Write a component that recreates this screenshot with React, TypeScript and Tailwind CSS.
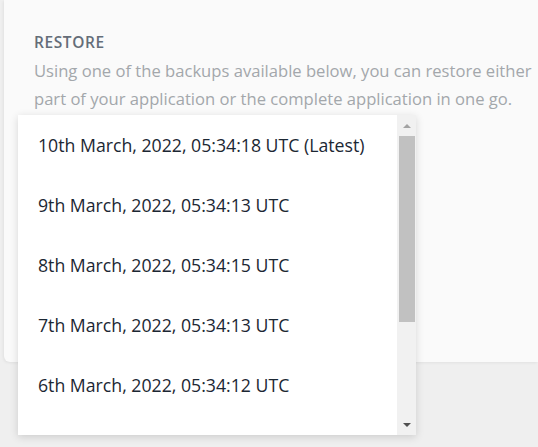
import React from 'react';

const backups = [
  '10th March, 2022, 05:34:18 UTC (Latest)',
  '9th March, 2022, 05:34:13 UTC',
  '8th March, 2022, 05:34:15 UTC',
  '7th March, 2022, 05:34:13 UTC',
  '6th March, 2022, 05:34:12 UTC',
];

export default function App() {
  return (
    <div
      className="h-[447px] w-[538px] overflow-hidden bg-[#efefef] pl-[4px]"
      style={{ fontFamily: '"Open Sans", Lato, sans-serif' }}
    >
      {/* Card */}
      <div className="relative h-[362px] rounded-bl-[6px] bg-[#fafafa] pl-[30px] pt-[32px] shadow-[-1px_1px_3px_rgba(0,0,0,0.06)]">
        <h2 className="text-[15.5px] font-semibold leading-[21px] tracking-[0.6px] text-[#646d78]">RESTORE</h2>
        <p className="mt-[4px] w-[502px] text-[16.6px] leading-[28px] text-[#a3a7ab]">
          Using one of the backups available below, you can restore either part of your application or the complete
          application in one go.
        </p>

        {/* Listbox dropdown */}
        <div className="absolute left-[14px] top-[115px] flex h-[320px] w-[398px] bg-white shadow-[0_2px_8px_rgba(0,0,0,0.15)]">
          <ul className="flex-1">
            {backups.map((b) => (
              <li key={b} className="flex h-[60px] items-center pl-[20px] text-[17.7px] text-[#1c2733]">
                {b}
              </li>
            ))}
          </ul>
          {/* Scrollbar */}
          <div className="flex w-[19px] flex-col items-center bg-[#f1f1f1]">
            <div className="flex h-[21px] items-center justify-center">
              <div className="h-0 w-0 border-x-[4px] border-b-[4px] border-x-transparent border-b-[#a3a3a3]" />
            </div>
            <div className="h-[186px] w-[16px] bg-[#c1c1c1]" />
            <div className="flex-1" />
            <div className="flex h-[21px] items-center justify-center">
              <div className="h-0 w-0 border-x-[4px] border-t-[4px] border-x-transparent border-t-[#505050]" />
            </div>
          </div>
        </div>
      </div>
    </div>
  );
}
